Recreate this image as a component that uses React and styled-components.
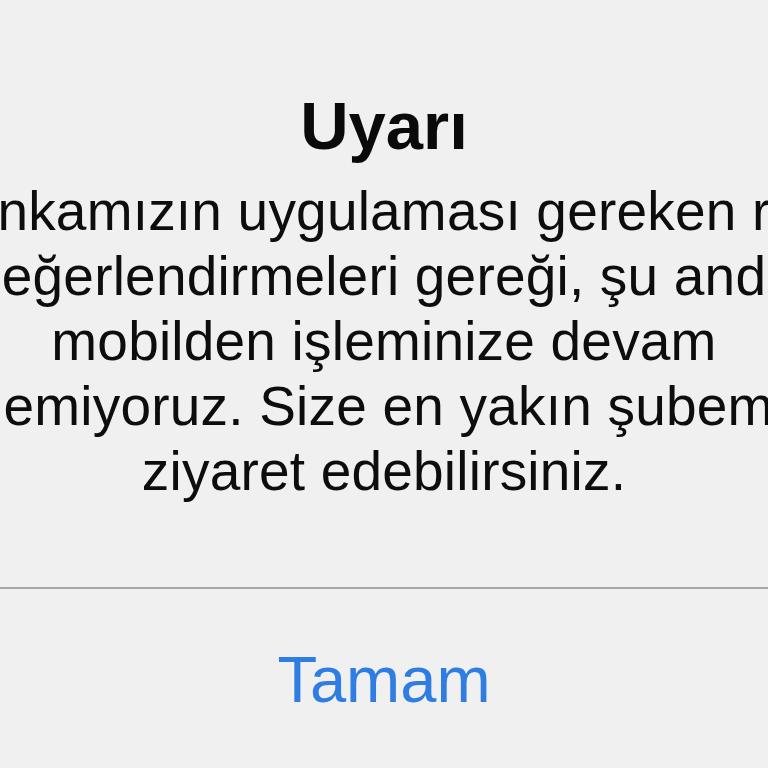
import React from "react";
import styled, { createGlobalStyle } from "styled-components";

const Global = createGlobalStyle`
  html, body {
    margin: 0;
    padding: 0;
    background: #f0f0f0;
    overflow: hidden;
  }
  body {
    font-family: "Liberation Sans", Arial, sans-serif;
  }
`;

const Alert = styled.div`
  width: 768px;
  height: 768px;
  display: flex;
  flex-direction: column;
  align-items: stretch;
  background: #f0f0f0;
  overflow: hidden;
`;

const Content = styled.div`
  display: flex;
  flex-direction: column;
  align-items: center;
  padding-top: 86px;
  padding-bottom: 83px;
`;

const Title = styled.h1`
  margin: 0 0 13px;
  font-size: 67px;
  line-height: 80px;
  font-weight: 700;
  color: #0a0a0a;
  white-space: nowrap;
`;

const Message = styled.div`
  display: flex;
  flex-direction: column;
  align-items: center;
  width: 100%;
`;

const Line = styled.span`
  display: block;
  white-space: nowrap;
  font-size: 55px;
  line-height: 65px;
  letter-spacing: 0.2px;
  color: #0d0d0d;
`;

const Separator = styled.div`
  height: 1.5px;
  background: #a9a9a9;
`;

const ActionButton = styled.button`
  align-self: center;
  margin-top: 51px;
  padding: 0;
  border: none;
  background: transparent;
  font-family: "Liberation Sans", Arial, sans-serif;
  font-size: 65px;
  line-height: 80px;
  color: #2f7de3;
  cursor: pointer;
`;

const lines = [
  "Bankamızın uygulaması gereken risk",
  "değerlendirmeleri gereği, şu anda",
  "mobilden işleminize devam",
  "edemiyoruz. Size en yakın şubemizi",
  "ziyaret edebilirsiniz.",
];

export default function App() {
  return (
    <>
      <Global />
      <Alert>
        <Content>
          <Title>Uyarı</Title>
          <Message>
            {lines.map((l) => (
              <Line key={l}>{l}</Line>
            ))}
          </Message>
        </Content>
        <Separator />
        <ActionButton>Tamam</ActionButton>
      </Alert>
    </>
  );
}
